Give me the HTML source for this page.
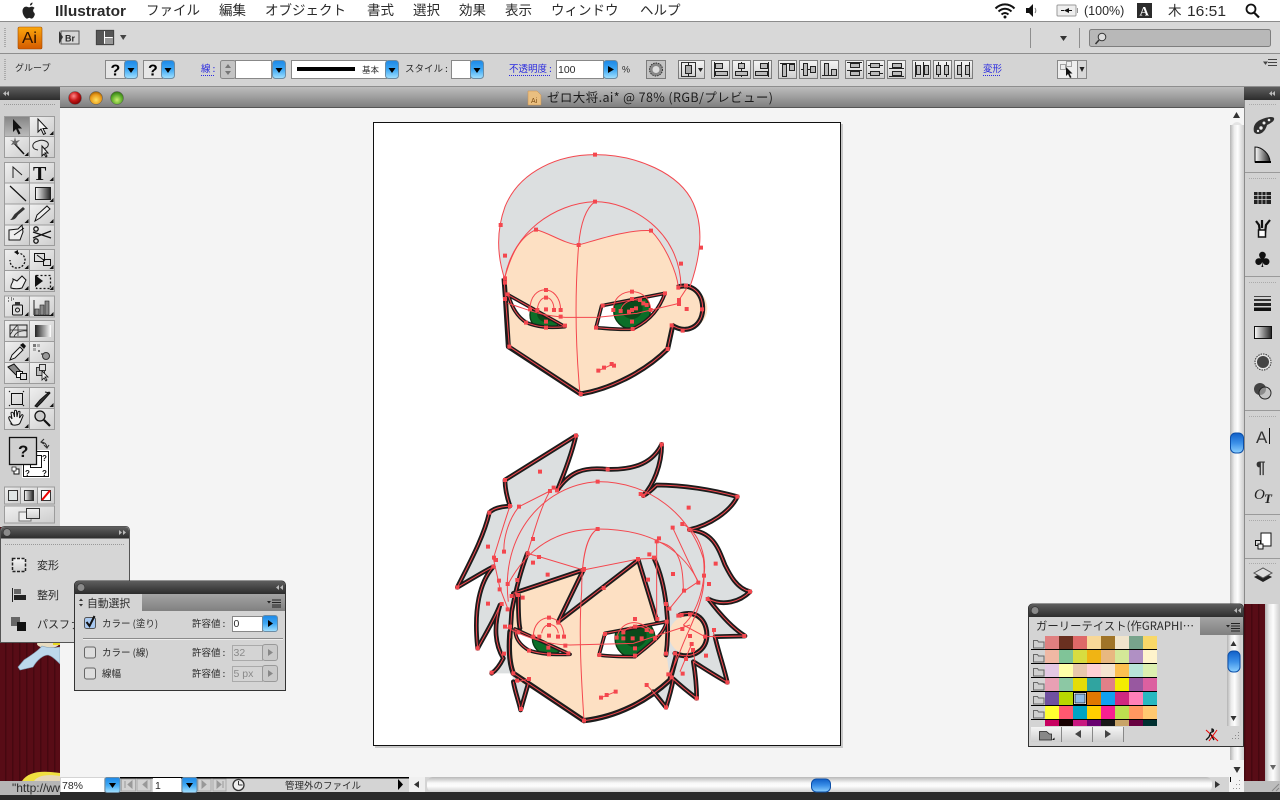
<!DOCTYPE html>
<html lang="ja"><head><meta charset="utf-8"><title>Illustrator</title>
<style>
html,body{margin:0;padding:0;background:#222;width:1280px;height:800px;overflow:hidden}
svg{display:block}
text{font-family:"Liberation Sans","Noto Sans CJK JP",sans-serif;fill:#2a2a2a}
.j{font-family:"Noto Sans CJK JP","Liberation Sans",sans-serif}
.lnk{fill:#2a2ae0}
.dis{fill:#8a8a8a}
.ic{fill:none;stroke:#222;stroke-width:1}
</style></head><body>
<svg width="1280" height="800" viewBox="0 0 1280 800" xmlns="http://www.w3.org/2000/svg">
<defs>
<linearGradient id="hd" x1="0" y1="0" x2="0" y2="1"><stop offset="0" stop-color="#5e5e5e"/><stop offset="1" stop-color="#2c2c2c"/></linearGradient>
<linearGradient id="title" x1="0" y1="0" x2="0" y2="1"><stop offset="0" stop-color="#bdbdbd"/><stop offset="1" stop-color="#7c7c7c"/></linearGradient>
<linearGradient id="blue" x1="0" y1="0" x2="0" y2="1"><stop offset="0" stop-color="#1c88e6"/><stop offset=".5" stop-color="#3ea8f4"/><stop offset="1" stop-color="#a4e2ff"/></linearGradient>
<linearGradient id="btn" x1="0" y1="0" x2="0" y2="1"><stop offset="0" stop-color="#f4f4f4"/><stop offset="1" stop-color="#cfcfcf"/></linearGradient>
<linearGradient id="cell" x1="0" y1="0" x2="1" y2="1"><stop offset="0" stop-color="#f0f0f0"/><stop offset="1" stop-color="#cdcdcd"/></linearGradient>
<linearGradient id="sel" x1="0" y1="0" x2="0" y2="1"><stop offset="0" stop-color="#848484"/><stop offset="1" stop-color="#bcbcbc"/></linearGradient>
<linearGradient id="gk" x1="0" y1="0" x2="1" y2="0"><stop offset="0" stop-color="#fff"/><stop offset="1" stop-color="#222"/></linearGradient>
<linearGradient id="vs" x1="0" y1="0" x2="1" y2="0"><stop offset="0" stop-color="#b4b4b4"/><stop offset=".3" stop-color="#ececec"/><stop offset=".55" stop-color="#fdfdfd"/><stop offset="1" stop-color="#cccccc"/></linearGradient>
<linearGradient id="hs" x1="0" y1="0" x2="0" y2="1"><stop offset="0" stop-color="#b8b8b8"/><stop offset=".4" stop-color="#f8f8f8"/><stop offset=".6" stop-color="#fdfdfd"/><stop offset="1" stop-color="#d0d0d0"/></linearGradient>
<linearGradient id="thumb" x1="0" y1="0" x2="0" y2="1"><stop offset="0" stop-color="#0f5fc8"/><stop offset=".5" stop-color="#3b8fe8"/><stop offset="1" stop-color="#8cd0ff"/></linearGradient>
<linearGradient id="tab2" x1="0" y1="0" x2="0" y2="1"><stop offset="0" stop-color="#a4a4a4"/><stop offset="1" stop-color="#808080"/></linearGradient>
<linearGradient id="ai" x1="0" y1="0" x2="0" y2="1"><stop offset="0" stop-color="#fba70c"/><stop offset="1" stop-color="#d45a00"/></linearGradient>
<pattern id="st" width="7" height="7" patternUnits="userSpaceOnUse"><rect width="7" height="7" fill="#580c16"/><rect x="5" width="1.500" height="7" fill="#460810"/></pattern>
<radialGradient id="r1" cx=".4" cy=".35" r=".7"><stop offset="0" stop-color="#ff8a8a"/><stop offset=".5" stop-color="#c81818"/><stop offset="1" stop-color="#700"/></radialGradient>
<radialGradient id="r2" cx=".5" cy=".65" r=".7"><stop offset="0" stop-color="#ffe060"/><stop offset=".6" stop-color="#e89818"/><stop offset="1" stop-color="#8a5000"/></radialGradient>
<radialGradient id="r3" cx=".5" cy=".65" r=".7"><stop offset="0" stop-color="#c8f070"/><stop offset=".6" stop-color="#58a828"/><stop offset="1" stop-color="#2a6010"/></radialGradient>
<g id="bd"><rect x=".5" y=".5" width="13" height="18" rx="3" fill="url(#blue)" stroke="#6c8ca4"/><path d="M3.5 8h7l-3.5 5z" fill="#000"/></g>
<g id="br"><rect x=".5" y=".5" width="14" height="18" rx="3" fill="url(#blue)" stroke="#6c8ca4"/><path d="M5 6l6 3.5-6 3.5z" fill="#000"/></g>
<g id="ab"><rect x=".5" y=".5" width="18" height="18" fill="url(#btn)" stroke="#7c7c7c"/></g>
<g id="tri"><path d="M0 0h-4l4-4z" fill="#111"/></g>
<clipPath id="ce1"><path d="M85,465L255,560C200,565 170,560 140,548C110,530 95,500 85,465Z"/></clipPath>
<clipPath id="ce2"><path d="M365,497L555,460C540,500 515,540 458,567C420,570 380,565 348,563Z"/></clipPath>
<clipPath id="ce3"><path d="M195,612L360,688C300,690 260,685 235,675C210,660 195,640 195,612Z"/></clipPath>
<clipPath id="ce4"><path d="M465,625L650,590C640,630 610,650 555,695C520,695 480,695 447,690Z"/></clipPath>
</defs>

<!-- desktop -->
<rect width="1280" height="800" fill="url(#st)"/>
<rect y="792" width="1280" height="8" fill="#2a2a2a"/>

<!-- desktop character scraps -->
<ellipse cx="48" cy="644" rx="11" ry="4" fill="#e8dcc0"/><rect x="53" y="642" width="7" height="3" fill="#e8d820"/>
<path d="M42,646C38,651 30,656 24,660L18,667L20,670L33,667C37,660 43,655 48,655C52,656 56,660 60,664V647C54,648 48,648 42,646Z" fill="#bcd8ec" stroke="#7c9cb4" stroke-width=".6"/>
<path d="M22,781C28,772 40,770 60,773V781Z" fill="#f0e040"/><path d="M34,781C38,775 48,774 60,776V781Z" fill="#e6d8b8"/>
<rect x="0" y="781" width="60" height="14" fill="#b6b6b6"/>
<text x="12" y="792" font-size="12">"http://ww</text>

<!-- menu bar -->
<rect width="1280" height="21" fill="#fff"/><rect y="21" width="1280" height="1" fill="#8c8c8c"/>
<path d="M32.5 2.5c-1.5.2-2.6 1.400-2.500 3 1.500 0 2.700-1.500 2.500-3zM34.500 13c-.7-.4-1.300-1.300-1.300-2.500 0-1.200.7-2 1.400-2.500-.8-1-1.900-1.400-2.800-1.400-1.200 0-1.700.7-2.700.7-1 0-1.700-.7-2.800-.7-2 0-3.800 1.700-3.800 4.500 0 3.300 2.700 7.500 4.500 7.500 1 0 1.300-.7 2.300-.7 1 0 1.300.7 2.300.7 1.400 0 2.600-2.100 3.200-4z" fill="#222"/>
<text x="55" y="16" font-size="15" font-weight="bold" textLength="71" lengthAdjust="spacingAndGlyphs">Illustrator</text>
<g class="j" font-size="13.500">
<text class="j" x="146" y="15">ファイル</text><text class="j" x="219" y="15">編集</text><text class="j" x="265" y="15">オブジェクト</text><text class="j" x="367" y="15">書式</text><text class="j" x="413" y="15">選択</text><text class="j" x="459" y="15">効果</text><text class="j" x="505" y="15">表示</text><text class="j" x="551" y="15">ウィンドウ</text><text class="j" x="640" y="15">ヘルプ</text>
</g>
<!-- status icons -->
<g fill="none" stroke="#111" stroke-width="2"><path d="M995.500 8.500c5.500-5.500 13.500-5.500 19 0"/><path d="M998.500 11.500c4-3.700 9-3.700 13 0"/><path d="M1001.500 14.500c2.300-2 4.700-2 7 0"/></g><circle cx="1005" cy="17" r="1.500" fill="#111"/>
<path d="M1026 8h3l4-4v13l-4-4h-3z" fill="#111"/><path d="M1035 8c1 1.500 1 3.500 0 5" fill="none" stroke="#777"/>
<rect x="1057" y="5" width="19" height="11" rx="1" fill="#eee" stroke="#999"/><rect x="1077" y="8" width="1" height="5" fill="#999"/><path d="M1069 8v5l-5-2.500zM1064 10h-3v1h3zM1069 10h3v1h-3z" fill="#111"/>
<text x="1084" y="15" font-size="12.500" fill="#333">(100%)</text>
<rect x="1137" y="3" width="15" height="15" fill="#2b2b2b"/><text x="1139.500" y="15.500" font-size="13" font-weight="bold" style="fill:#fff;font-family:'Liberation Serif',serif">A</text>
<text class="j" x="1168" y="15.500" font-size="13.500">木</text><text x="1187" y="16" font-size="14.500" textLength="39" lengthAdjust="spacingAndGlyphs">16:51</text>
<circle cx="1251" cy="9" r="4.500" fill="none" stroke="#111" stroke-width="1.800"/><path d="M1254 12.500l5 5" stroke="#111" stroke-width="2.200"/>

<!-- app bar -->
<rect y="22" width="1280" height="31" fill="#d8d8d8"/><rect y="53" width="1280" height="1" fill="#8e8e8e"/>
<path d="M5 28v20" stroke="#aaa" stroke-dasharray="1 1" stroke-width="2"/>
<rect x="18" y="27" width="24" height="22" rx="1.500" fill="url(#ai)" stroke="#a04a00" stroke-width=".6"/>
<text x="22" y="43" font-size="16" textLength="15" lengthAdjust="spacingAndGlyphs" style="fill:#2a1000">Ai</text>
<rect x="61" y="31" width="18" height="13" fill="#d6d6d6" stroke="#555"/><path d="M59 31l4 6-4 7z" fill="#333"/><text x="65" y="41.500" font-size="9" font-weight="bold" fill="#333">Br</text>
<rect x="96.500" y="30.500" width="17" height="14" fill="#fff" stroke="#444" stroke-width="1.300"/><path d="M97 31h7v13h-7zM105 31h8v6h-8z" fill="#555"/><path d="M105 38h8v6h-8z" fill="#999"/>
<path d="M120 35h6.500l-3.300 5z" fill="#444"/>
<path d="M1030.500 28v20M1079.500 28v20" stroke="#8e8e8e"/><path d="M1060 36h7l-3.500 5z" fill="#333"/>
<rect x="1089.500" y="29.500" width="181" height="17" rx="2" fill="#b8b8b8" stroke="#7e7e7e"/>
<circle cx="1102" cy="37" r="3.800" fill="#ddd" stroke="#333"/><path d="M1099 40l-3.500 4" stroke="#333" stroke-width="1.500"/>

<!-- control bar -->
<rect y="54" width="1280" height="32" fill="#d4d4d4"/><rect y="86" width="1280" height="1" fill="#8e8e8e"/>
<path d="M5 59v22" stroke="#aaa" stroke-dasharray="1 1" stroke-width="2"/>
<text class="j" x="15" y="71" font-size="9">グループ</text>
<rect x="105.500" y="60.500" width="20" height="18" fill="#e6e6e6" stroke="#888"/><text x="110.500" y="75.500" font-size="16" font-weight="bold" style="fill:#000">?</text><use href="#bd" x="124" y="60"/>
<rect x="143.500" y="60.500" width="19" height="18" fill="#e6e6e6" stroke="#888"/><text x="148" y="75.500" font-size="16" font-weight="bold" style="fill:#000">?</text><use href="#bd" x="161" y="60"/>
<text class="j lnk" x="201" y="72" font-size="9.500">線 :</text><path d="M201 75.500h13" stroke="#2a2ae0" stroke-dasharray="1 1"/>
<rect x="220.500" y="60.500" width="15" height="18" fill="#c4c4c4" stroke="#888" rx="2"/><path d="M225 68h6l-3-4zM225 71h6l-3 4z" fill="#777"/>
<rect x="235.500" y="60.500" width="36" height="18" fill="#fff" stroke="#888"/><use href="#bd" x="272" y="60"/>
<rect x="291.500" y="60.500" width="95" height="18" fill="#fff" stroke="#888"/><rect x="297" y="67" width="58" height="4" fill="#000"/><text class="j" x="362" y="73" font-size="8.500">基本</text><use href="#bd" x="385" y="60"/>
<text class="j" x="405" y="72" font-size="9.500">スタイル :</text>
<rect x="451.500" y="60.500" width="19" height="18" fill="#fff" stroke="#888"/><use href="#bd" x="470" y="60"/>
<text class="j lnk" x="509" y="72" font-size="9.500">不透明度 :</text><path d="M509 75.500h42" stroke="#2a2ae0" stroke-dasharray="1 1"/>
<rect x="556.500" y="60.500" width="47" height="18" fill="#fff" stroke="#888"/><text x="558" y="73" font-size="10.500">100</text><use href="#br" x="603" y="60"/>
<text x="622" y="72.500" font-size="9">%</text>
<!-- globe/recolor -->
<rect x="646.500" y="60.500" width="19" height="18" fill="#c4c4c4" stroke="#7c7c7c"/><circle cx="656" cy="69.500" r="6.500" fill="#888" stroke="#333" stroke-dasharray="1.500 1"/><circle cx="656" cy="69.500" r="3.500" fill="#ddd"/>
<!-- align btns -->
<rect x="678.500" y="60.500" width="26" height="18" fill="url(#btn)" stroke="#7c7c7c"/><rect x="681.500" y="62.500" width="14" height="14" fill="none" stroke="#333"/><path d="M688.500 62v15" stroke="#222"/><rect x="685.500" y="65.500" width="6" height="8" fill="#aaa" stroke="#222"/><path d="M698 68h5l-2.500 4z" fill="#222"/>
<g fill="#bbb" stroke="#222">
<use href="#ab" x="711" y="60"/><path d="M714.500 62v15" /><rect x="715.500" y="63.500" width="7" height="5"/><rect x="715.500" y="71.500" width="12" height="4"/>
<use href="#ab" x="732" y="60"/><path d="M741.500 62v15"/><rect x="738.500" y="63.500" width="6" height="5"/><rect x="735.500" y="71.500" width="12" height="4"/>
<use href="#ab" x="753" y="60"/><path d="M768.500 62v15"/><rect x="760.500" y="63.500" width="7" height="5"/><rect x="755.500" y="71.500" width="12" height="4"/>
<use href="#ab" x="778" y="60"/><path d="M780 63.500h15"/><rect x="782.500" y="64.500" width="4" height="12"/><rect x="789.500" y="64.500" width="5" height="6"/>
<use href="#ab" x="799" y="60"/><path d="M801 69.500h15"/><rect x="803.500" y="63.500" width="4" height="12"/><rect x="810.500" y="66.500" width="5" height="6"/>
<use href="#ab" x="820" y="60"/><path d="M822 75.500h15"/><rect x="824.500" y="63.500" width="4" height="12"/><rect x="831.500" y="69.500" width="5" height="6"/>
<use href="#ab" x="845" y="60"/><path d="M847 62.500h15M847 70.500h15"/><rect x="850.500" y="63.500" width="9" height="4"/><rect x="850.500" y="71.500" width="9" height="4"/>
<use href="#ab" x="866" y="60"/><path d="M868 65.500h15M868 73.500h15"/><rect x="870.500" y="63.500" width="9" height="4"/><rect x="870.500" y="71.500" width="9" height="4"/>
<use href="#ab" x="887" y="60"/><path d="M889 68.500h15M889 76.500h15"/><rect x="892.500" y="63.500" width="9" height="4"/><rect x="892.500" y="71.500" width="9" height="4"/>
<use href="#ab" x="912" y="60"/><path d="M915.500 62v15M923.500 62v15"/><rect x="916.500" y="65.500" width="4" height="9"/><rect x="924.500" y="65.500" width="4" height="9"/>
<use href="#ab" x="933" y="60"/><path d="M938.500 62v15M946.500 62v15"/><rect x="936.500" y="65.500" width="4" height="9"/><rect x="944.500" y="65.500" width="4" height="9"/>
<use href="#ab" x="954" y="60"/><path d="M961.500 62v15M969.500 62v15"/><rect x="957.500" y="65.500" width="4" height="9"/><rect x="965.500" y="65.500" width="4" height="9"/>
</g>
<text class="j lnk" x="983" y="72" font-size="9.500">変形</text><path d="M983 75.500h18" stroke="#2a2ae0" stroke-dasharray="1 1"/>
<rect x="1057.500" y="60.500" width="20" height="18" fill="#eee" stroke="#888"/><rect x="1077.500" y="60.500" width="9" height="18" fill="#d8d8d8" stroke="#888"/><path d="M1079.500 67h5l-2.500 5z" fill="#222"/>
<rect x="1060.500" y="64.500" width="5" height="5" fill="none" stroke="#555" stroke-dasharray="1 1"/><rect x="1066.500" y="61.500" width="5" height="5" fill="none" stroke="#555" stroke-dasharray="1 1"/>
<path d="M1066 67l0 9 2-2 2 4 1.500-.8-2-3.700h3z" fill="#111"/>
<path d="M1264 62h3l-1.500 2zM1268 59.500h9M1268 62.500h9M1268 65.500h9" stroke="#444" fill="#444"/>

<!-- left toolbar -->
<rect y="87" width="60" height="440" fill="#d0d0d0"/>
<rect y="87" width="60" height="13" fill="url(#hd)"/><path d="M9 91l-3 2.500 3 2.500zM6 91l-3 2.500 3 2.500z" fill="#bbb"/>
<path d="M4 104.500h51" stroke="#999" stroke-dasharray="1 1"/>
<g fill="url(#cell)" stroke="#9c9c9c">
<rect x="4.500" y="116.500" width="25" height="20" fill="url(#sel)"/><rect x="29.500" y="116.500" width="25" height="20"/><rect x="4.500" y="136.500" width="25" height="21"/><rect x="29.500" y="136.500" width="25" height="21"/>
<rect x="4.500" y="162.500" width="25" height="20.500"/><rect x="29.500" y="162.500" width="25" height="20.500"/><rect x="4.500" y="183" width="25" height="21"/><rect x="29.500" y="183" width="25" height="21"/><rect x="4.500" y="204" width="25" height="21"/><rect x="29.500" y="204" width="25" height="21"/><rect x="4.500" y="225" width="25" height="20.500"/><rect x="29.500" y="225" width="25" height="20.500"/>
<rect x="4.500" y="249.500" width="25" height="21"/><rect x="29.500" y="249.500" width="25" height="21"/><rect x="4.500" y="270.500" width="25" height="21"/><rect x="29.500" y="270.500" width="25" height="21"/>
<rect x="4.500" y="296" width="25" height="21"/><rect x="29.500" y="296" width="25" height="21"/>
<rect x="4.500" y="320.500" width="25" height="21"/><rect x="29.500" y="320.500" width="25" height="21"/><rect x="4.500" y="341.500" width="25" height="21"/><rect x="29.500" y="341.500" width="25" height="21"/><rect x="4.500" y="362.500" width="25" height="21"/><rect x="29.500" y="362.500" width="25" height="21"/>
<rect x="4.500" y="387.500" width="25" height="21"/><rect x="29.500" y="387.500" width="25" height="21"/><rect x="4.500" y="408.500" width="25" height="21"/><rect x="29.500" y="408.500" width="25" height="21"/>
<rect x="4.500" y="487" width="16" height="17"/><rect x="20.500" y="487" width="17" height="17"/><rect x="37.500" y="487" width="17" height="17"/><rect x="4.500" y="506" width="50" height="17"/>
</g>
<!-- tool icons -->
<path d="M13 119v13l3-3 2.500 5.500 2-1-2.500-5h4z" fill="#111"/>
<path d="M38 119v13l3-3 2.500 5.500 2-1-2.500-5h4z" fill="#f4f4f4" stroke="#111"/>
<path d="M14 143l10 11" stroke="#111" stroke-width="1.500"/><path d="M10 140l4 1 1-4 1 4 4-1-3 3 1 4-3-3-4 1 2-3z" fill="#666"/>
<path d="M38 150c-7-1-7-7 0-9 6-2 12 1 10 5-1 2-4 3-6 3" class="ic"/><path d="M42 146v10l2-2 2 3 1-1-2-3h3z" fill="#eee" stroke="#111"/>
<path d="M13 178v-11l9 8" class="ic" stroke-width="1.300"/>
<text x="33" y="180" font-size="20" style="font-family:'Liberation Serif',serif;font-weight:bold;fill:#111">T</text>
<path d="M10 186l16 15" stroke="#111" stroke-width="1.200"/>
<rect x="35.500" y="187.500" width="15" height="12" fill="url(#gk)" stroke="#222"/>
<path d="M10 220c5 0 6-2 8-5l7-6-2-2-7 6c-3 2-3 5-6 7z" fill="#333"/>
<path d="M35 221l2-6 10-9 3 3-10 9z" fill="#eee" stroke="#111"/>
<path d="M9 230l9-1 4-4 1 7-3 8H9zM14 235l10-7" fill="#eee" stroke="#111"/>
<path d="M33 232l18 6M33 238l18-7" stroke="#111" stroke-width="1.300"/><circle cx="36" cy="229" r="2.200" fill="none" stroke="#111" stroke-width="1.300"/><circle cx="36" cy="241" r="2.200" fill="none" stroke="#111" stroke-width="1.300"/>
<path d="M17 253c5 0 8 3 8 7s-3 8-8 8-7-4-7-8" fill="none" stroke="#111" stroke-width="1.300" stroke-dasharray="2 1.500"/><path d="M14 252l4-2v5z" fill="#111"/>
<rect x="34.500" y="253.500" width="10" height="8" fill="#ddd" stroke="#111"/><rect x="43.500" y="259.500" width="7" height="6" fill="#ddd" stroke="#111"/><path d="M37 255l8 6" stroke="#111"/>
<path d="M11 288c-1-4 3-6 2-9l4 2 5-5 4 4-4 8c-3 1-8 1-11 0z" fill="#eee" stroke="#111"/>
<rect x="36.500" y="275.500" width="14" height="13" fill="none" stroke="#111" stroke-dasharray="2 2" stroke-width="1.300"/><path d="M35 275v12l8-6z" fill="#111"/>
<rect x="12.500" y="305" width="10" height="10" rx="1" fill="#ddd" stroke="#111"/><rect x="15" y="302" width="5" height="3" fill="#333"/><circle cx="17.500" cy="310" r="2" fill="none" stroke="#111"/><path d="M8 298h1M11 298h1M8 301h1M11 300h1M13 299h1" stroke="#111"/>
<path d="M34 315v-15" stroke="#222"/><rect x="35" y="309" width="4" height="6" fill="#888" stroke="#222" stroke-width=".6"/><rect x="40" y="305" width="4" height="10" fill="#888" stroke="#222" stroke-width=".6"/><rect x="45" y="301" width="4" height="14" fill="#888" stroke="#222" stroke-width=".6"/><path d="M34 315.500h17" stroke="#222"/>
<rect x="10" y="325" width="17" height="12" fill="#ddd" stroke="#222"/><path d="M10 335c3-5 6-9 8-10M14 337c1-4 6-7 13-6M18 326v10M10 330h17" fill="none" stroke="#222" stroke-width=".7"/>
<rect x="35" y="325" width="16" height="12" fill="url(#gk)" transform="rotate(180 43 331)"/>
<path d="M10 360l2-5 8-8 3 3-8 8z" fill="#eee" stroke="#111"/><path d="M20 345l3-2 3 3-2 3z" fill="#111"/>
<g fill="#777"><rect x="33" y="344" width="3" height="3"/><rect x="37" y="344" width="3" height="3" fill="#aaa"/><rect x="33" y="348" width="3" height="3" fill="#aaa"/><rect x="38" y="350" width="2" height="2"/><rect x="41" y="353" width="2" height="2"/></g><circle cx="46" cy="356" r="3.500" fill="#999" stroke="#333"/>
<path d="M8 367l6-3 8 9-5 3z" fill="#888" stroke="#111"/><rect x="16.500" y="371.500" width="6" height="6" fill="#fff" stroke="#111"/><rect x="20.500" y="373.500" width="6" height="6" fill="#ddd" stroke="#111"/>
<rect x="36.500" y="367.500" width="8" height="8" fill="#bbb" stroke="#333"/><rect x="39.500" y="364.500" width="6" height="6" fill="#ddd" stroke="#333"/><path d="M42 371v9l2-2 2 3 1-1-2-3h3z" fill="#eee" stroke="#111" stroke-width=".8"/>
<rect x="11.500" y="393.500" width="11" height="11" fill="none" stroke="#111"/><path d="M9 391l1 1M9 406l1-1M24 391l-1 1M24 406l-1-1" stroke="#111"/>
<path d="M35 406l5-6 9-8 1 1-8 9-5 5zM45 392l5 1" fill="#333" stroke="#111"/>
<path d="M12 424c-2-3-4-6-3-7 1-1 2 0 3 2l-1-6c0-1 2-1 2.500 0l1 4v-6c0-1 2-1 2 0l.5 6 1-5c.3-1 2-1 2 0l-.5 6 2-3c.6-1 2 0 1.500 1l-3 7c-1 2-7 3-9 1z" fill="#eee" stroke="#111"/>
<circle cx="40" cy="416" r="5" fill="#ccc" stroke="#111" stroke-width="1.300"/><path d="M44 420l6 6" stroke="#111" stroke-width="2.200"/>
<g>
<use href="#tri" x="28.500" y="156"/><use href="#tri" x="53.500" y="135"/><use href="#tri" x="28.500" y="181"/><use href="#tri" x="53.500" y="181"/><use href="#tri" x="53.500" y="202"/><use href="#tri" x="28.500" y="223"/><use href="#tri" x="53.500" y="223"/><use href="#tri" x="53.500" y="290"/><use href="#tri" x="28.500" y="269"/><use href="#tri" x="53.500" y="269"/><use href="#tri" x="28.500" y="290"/><use href="#tri" x="28.500" y="316"/><use href="#tri" x="53.500" y="316"/><use href="#tri" x="28.500" y="361"/><use href="#tri" x="53.500" y="407"/><use href="#tri" x="28.500" y="428"/>
</g>
<!-- fill & stroke -->
<rect x="22" y="450" width="28" height="28" fill="#fff"/><rect x="23.500" y="451.500" width="25" height="25" fill="none" stroke="#111"/><rect x="30.500" y="455.500" width="11" height="12" fill="none" stroke="#111"/>
<text x="42" y="461" font-size="8" font-weight="bold" style="fill:#111">?</text><text x="42" y="476" font-size="8" font-weight="bold" style="fill:#111">?</text><text x="25" y="476" font-size="8" font-weight="bold" style="fill:#111">?</text>
<rect x="9.500" y="437.500" width="27" height="27" fill="#d0d0d0" stroke="#111" stroke-width="1.300"/><text x="18" y="457" font-size="17" font-weight="bold" style="fill:#111">?</text>
<rect x="14" y="469" width="5" height="5" fill="#fff" stroke="#111"/><rect x="12" y="467" width="4" height="4" fill="#fff" stroke="#111" stroke-width=".7"/>
<path d="M41 442c3 0 5 1 6 5M44 439l-3 3 3 2M44 445l3 3 2-3" fill="none" stroke="#333" stroke-width="1.100"/>
<rect x="8.500" y="490.500" width="9" height="10" fill="#dfe5e5" stroke="#333"/><rect x="24.500" y="490.500" width="9" height="10" fill="url(#gk)" stroke="#333"/><rect x="41.500" y="490.500" width="9" height="10" fill="#fff" stroke="#333"/><path d="M42 500l8-9.500" stroke="#e00" stroke-width="2"/>
<rect x="19" y="512" width="12" height="9" fill="#eee" stroke="#777"/><rect x="26.500" y="508.500" width="13" height="10" fill="url(#btn)" stroke="#333"/>

<!-- right dock -->
<rect x="1244" y="87" width="36" height="517" fill="#d2d2d2"/>
<rect x="1244" y="87" width="36" height="13" fill="url(#hd)"/><rect x="1244" y="100" width="1" height="504" fill="#8a8a8a"/><path d="M1272 91l-3 2.500 3 2.500zM1275 91l-3 2.500 3 2.500z" fill="#bbb"/>
<g stroke="#9a9a9a"><path d="M1245 172.500h35M1245 276.500h35M1245 410.500h35M1245 514.500h35M1245 558.500h35"/></g>
<g stroke="#aaa" stroke-dasharray="1 1"><path d="M1249 104.500h27M1249 178.500h27M1249 282.500h27M1249 416.500h27M1249 520.500h27M1249 563.500h27"/></g>
<path d="M1254 132c-1-4 0-9 6-12 6-3 13-4 14-2 1 3-3 5-7 7-1 4-4 9-9 9-2 0-3-1-4-2z" fill="#2f2f2f"/><circle cx="1261" cy="128" r="1.700" fill="#eee"/><circle cx="1258" cy="131" r="1.200" fill="#eee"/><circle cx="1264" cy="123" r="1.500" fill="#eee"/><circle cx="1269" cy="120" r="1.300" fill="#eee"/>
<path d="M1255 147c7 0 15 7 15 15h-15z" fill="url(#gk)" stroke="#111"/><path d="M1255 162h16" stroke="#000" stroke-width="2"/>
<rect x="1254" y="192" width="17" height="12" fill="#222"/><path d="M1254 195.500h17M1254 199.500h17M1258 192v12M1262 192v12M1266 192v12" stroke="#ddd" stroke-width=".8"/>
<path d="M1256 221l3 4 1 8h5l1-8 4-5M1262 220v8" stroke="#111" stroke-width="2.200" fill="none"/><rect x="1258.500" y="230" width="7" height="7" fill="#fff" stroke="#111" stroke-width="1.500"/>
<text x="1253" y="267" font-size="21" style="fill:#111;font-family:'DejaVu Sans',sans-serif">♣</text>
<rect x="1254" y="296" width="17" height="1" fill="#444"/><rect x="1254" y="299" width="17" height="2" fill="#333"/><rect x="1254" y="303" width="17" height="3" fill="#222"/><rect x="1254" y="307.500" width="17" height="3.500" fill="#111"/>
<rect x="1254.500" y="326.500" width="17" height="12" fill="url(#gk)" stroke="#111"/>
<circle cx="1263" cy="362" r="8" fill="#e6e6e6" stroke="#333" stroke-dasharray="1.500 1"/><circle cx="1263" cy="362" r="6" fill="#444"/>
<circle cx="1260" cy="389" r="6" fill="#444"/><circle cx="1265" cy="393" r="6" fill="#bbb" fill-opacity=".6" stroke="#222"/>
<text x="1256" y="443" font-size="17" style="fill:#333">A</text><path d="M1269.500 428v16" stroke="#111"/>
<text x="1256" y="473" font-size="17" font-weight="bold" style="fill:#333">¶</text>
<text x="1254" y="499" font-size="15" font-style="italic" style="font-family:'Liberation Serif',serif;fill:#222">O</text><text x="1264" y="503" font-size="13" font-style="italic" font-weight="bold" style="font-family:'Liberation Serif',serif;fill:#222">T</text>
<rect x="1261" y="533" width="10" height="13" fill="#fff" stroke="#111"/><rect x="1255.500" y="540.500" width="5" height="5" fill="#ddd" stroke="#111"/><rect x="1258" y="544" width="5" height="5" fill="#eee" stroke="#111"/>
<path d="M1254 577l9-5 9 5-9 5z" fill="#222"/><path d="M1254 573l9-5 9 5-9 5z" fill="#ddd" stroke="#555"/>
<!-- right behind -->
<rect x="1265" y="604" width="15" height="177" fill="url(#vs)"/><path d="M1273 770l-3-5h6z" fill="#666"/>
<rect x="1244" y="781" width="36" height="11" fill="#bdbdbd"/><path d="M1272 791l7-7M1276 791l3-3" stroke="#888"/>

<!-- doc window -->
<rect x="60" y="87" width="1184" height="21" fill="url(#title)"/><rect x="60" y="107" width="1184" height="1" fill="#555"/>
<circle cx="75" cy="98" r="6.500" fill="url(#r1)" stroke="#555" stroke-width=".5"/><circle cx="96" cy="98" r="6.500" fill="url(#r2)" stroke="#555" stroke-width=".5"/><circle cx="117" cy="98" r="6.500" fill="url(#r3)" stroke="#555" stroke-width=".5"/>
<path d="M528 91h9l4 4v10h-13z" fill="#eabf80" stroke="#c89050" stroke-width=".5"/><text x="531" y="103" font-size="7" style="fill:#7a4a10">Ai</text>
<text class="j" x="547" y="102" font-size="12.500" textLength="226" style="fill:#1c1c1c">ゼロ大将.ai* @ 78% (RGB/プレビュー)</text>
<rect x="60" y="108" width="1170" height="669" fill="#f4f4f4"/>
<!-- artboard -->
<rect x="375" y="124" width="468" height="624" fill="#c8c8c8"/>
<rect x="373.500" y="122.500" width="467" height="623" fill="#fff" stroke="#111"/>

<!-- Head 1 -->
<g transform="translate(480 140) scale(.33333)">
<path d="M75,420C90,340 120,290 168,269C210,280 250,310 296,315C350,300 440,268 513,272C550,300 590,400 595,440L585,555L563,627C500,690 400,745 302,762L88,620L75,470Z" fill="#fde0c3"/>
<circle cx="620" cy="505" r="62" fill="#fde0c3"/>
<path d="M75,420C45,330 55,255 75,200C120,90 240,44 345,44C470,44 600,100 640,190C670,260 665,340 630,440L595,440C590,400 550,300 513,272C440,268 350,300 296,315C250,310 210,280 168,269C120,290 90,340 75,420Z" fill="#dcdfe0"/>
<g fill="none" stroke="#1c1c1c" stroke-width="15" stroke-linejoin="round">
<path d="M72,415L76,470L85,620L302,762C400,745 500,690 563,627L578,558"/>
<path d="M592,442C625,428 670,450 668,510C665,560 620,585 575,555"/>
</g>
<path d="M85,465L255,560C200,565 170,560 140,548C110,530 95,500 85,465Z" fill="#fff"/>
<path d="M365,497L555,460C540,500 515,540 458,567C420,570 380,565 348,563Z" fill="#fff"/>
<g clip-path="url(#ce1)"><circle cx="197" cy="525" r="47" fill="#0b6e28" stroke="#0a3a14" stroke-width="4"/><circle cx="197" cy="520" r="26" fill="#0a4a1a"/></g>
<g clip-path="url(#ce2)"><circle cx="456" cy="512" r="55" fill="#0b6e28" stroke="#0a3a14" stroke-width="4"/><circle cx="456" cy="505" r="32" fill="#0a4a1a"/></g>
<g fill="none" stroke="#1c1c1c" stroke-width="11" stroke-linejoin="round">
<path d="M85,465L255,560C200,565 170,560 140,548C110,530 95,500 85,465Z"/>
<path d="M365,497L555,460C540,500 515,540 458,567C420,570 380,565 348,563Z"/>
</g>
<g fill="none" stroke="#f4474e" stroke-width="3">
<path d="M75,420C45,330 55,255 75,200C120,90 240,44 345,44C470,44 600,100 640,190C670,260 665,340 630,440"/>
<path d="M75,410C100,280 220,190 345,185C450,185 600,270 603,440"/>
<path d="M345,185C310,210 300,270 296,315C285,450 285,600 300,762"/>
<path d="M75,410C95,340 120,290 168,269C210,280 250,310 296,315C350,300 440,268 513,272C560,320 590,400 595,440"/>
<path d="M72,415L76,470L88,620L302,762C400,745 500,690 563,627L578,558"/>
<path d="M592,442C625,428 670,450 668,510C665,560 620,585 575,555"/>
<path d="M85,465L255,560C200,565 170,560 140,548C110,530 95,500 85,465Z"/>
<path d="M365,497L555,460C540,500 515,540 458,567C420,570 380,565 348,563Z"/>
<path d="M83,490C150,510 170,525 255,532L350,532L470,520L597,490"/>
<path d="M150,508C150,430 240,430 242,510M172,510C175,460 222,460 222,510"/>
<path d="M400,510C400,470 430,455 456,455C490,455 512,480 512,510M422,513C425,480 480,470 490,490"/>
<path d="M355,692L400,672"/><path d="M597,480L620,445"/>
</g>
<path d="M345 44h.01M62 255h.01M663 323h.01M345 185h.01M75 347h.01M168 269h.01M296 315h.01M513 272h.01M603 371h.01M75 415h.01M75 428h.01M83 463h.01M75 477h.01M88 620h.01M302 762h.01M563 627h.01M575 556h.01M608 572h.01M666 508h.01M620 507h.01M618 437h.01M595 443h.01M597 480h.01M597 492h.01M198 450h.01M198 473h.01M150 508h.01M172 510h.01M198 508h.01M222 510h.01M242 510h.01M242 530h.01M198 545h.01M198 563h.01M138 548h.01M255 557h.01M368 497h.01M348 563h.01M400 510h.01M422 513h.01M447 515h.01M456 510h.01M468 505h.01M456 455h.01M456 477h.01M480 480h.01M490 490h.01M500 495h.01M512 510h.01M456 545h.01M458 567h.01M555 460h.01M355 692h.01M372 683h.01M395 672h.01M402 677h.01" stroke="#f4474e" stroke-width="12" stroke-linecap="square"/>
</g>

<!-- Head 2 -->
<g transform="translate(450 425) scale(.33333)">
<path id="h2" d="M378,32L165,165C165,190 172,220 180,243C150,245 130,250 118,263C100,340 55,420 22,487C60,465 100,440 130,425C90,470 70,550 83,670C110,620 135,580 150,540C135,590 130,650 160,700C150,720 140,735 125,745L185,745C195,790 205,820 212,855L235,775L402,887C500,875 580,830 610,800L648,847C655,825 665,790 670,762C695,785 720,805 740,820C740,780 735,740 730,710C770,735 800,755 832,772C820,720 805,680 795,635L885,633C850,610 820,580 775,522C820,545 870,530 900,500C860,490 840,450 825,420C805,370 790,320 718,314C780,300 840,260 862,215C790,195 700,180 620,180C610,190 595,205 580,212C610,180 635,120 635,58C610,110 560,135 473,133C400,125 360,140 322,195C345,140 365,85 378,32Z" fill="#dcdfe0"/>
<path d="M190,505L400,435L325,590L565,405L620,585L650,590L650,690L660,765C590,830 500,875 402,887L200,765L185,745L170,640Z" fill="#fde0c3"/>
<circle cx="715" cy="630" r="58" fill="#fde0c3"/>
<g fill="none" stroke="#1c1c1c" stroke-width="14" stroke-linejoin="round" stroke-linecap="round">
<path d="M378,32L165,165C165,190 172,220 180,243C150,245 130,250 118,263C100,340 55,420 22,487C60,465 100,440 130,425C90,470 70,550 83,670C110,620 135,580 150,540C135,590 130,650 160,700C150,720 140,735 125,745"/>
<path d="M190,770C195,800 205,825 212,855L235,775"/>
<path d="M378,32C365,85 345,140 322,195C360,140 400,125 473,133C560,135 610,110 635,58C635,120 610,180 580,212C595,205 610,190 620,180C700,180 790,195 862,215C840,260 780,300 718,314C790,320 805,370 825,420C840,450 860,490 900,500C870,530 820,545 775,522C820,580 850,610 885,633L795,635C805,680 820,720 832,772C800,755 770,735 730,710C735,740 740,780 740,820C720,805 695,785 670,762C665,790 655,825 648,847C630,825 620,810 610,800"/>
<path d="M190,505L400,435L325,590L565,405L620,585"/>
<path d="M612,400C650,480 660,600 648,690"/>
<path d="M232,385C215,430 200,480 185,560L180,640"/>
<path d="M205,510C205,550 205,590 210,610"/>
<path d="M180,620C175,680 180,720 190,745L402,887C500,875 590,830 660,765L680,690" stroke-width="16"/>
<path d="M690,570C750,550 775,600 770,640C765,680 720,705 675,685" stroke-width="15"/>
</g>
<path d="M195,612L360,688C300,690 260,685 235,675C210,660 195,640 195,612Z" fill="#fff"/>
<path d="M465,625L650,590C640,630 610,650 555,695C520,695 480,695 447,690Z" fill="#fff"/>
<g clip-path="url(#ce3)"><circle cx="297" cy="640" r="50" fill="#0b6e28" stroke="#0a3a14" stroke-width="4"/><circle cx="297" cy="635" r="27" fill="#0a4a1a"/></g>
<g clip-path="url(#ce4)"><circle cx="555" cy="640" r="60" fill="#0b6e28" stroke="#0a3a14" stroke-width="4"/><circle cx="555" cy="632" r="35" fill="#0a4a1a"/></g>
<g fill="none" stroke="#1c1c1c" stroke-width="11" stroke-linejoin="round">
<path d="M195,612L360,688C300,690 260,685 235,675C210,660 195,640 195,612Z"/>
<path d="M465,625L650,590C640,630 610,650 555,695C520,695 480,695 447,690Z"/>
</g>
<g fill="none" stroke="#f4474e" stroke-width="3">
<path d="M378,32L165,165C165,190 172,220 180,243C150,245 130,250 118,263C100,340 55,420 22,487C60,465 100,440 130,425C90,470 70,550 83,670C110,620 135,580 150,540C135,590 130,650 160,700C150,720 140,735 125,745"/>
<path d="M190,770C195,800 205,825 212,855L235,775"/>
<path d="M378,32C365,85 345,140 322,195C360,140 400,125 473,133C560,135 610,110 635,58C635,120 610,180 580,212C595,205 610,190 620,180C700,180 790,195 862,215C840,260 780,300 718,314C790,320 805,370 825,420C840,450 860,490 900,500C870,530 820,545 775,522C820,580 850,610 885,633L795,635C805,680 820,720 832,772C800,755 770,735 730,710C735,740 740,780 740,820C720,805 695,785 670,762C665,790 655,825 648,847C630,825 610,800 590,780"/>
<path d="M190,505L400,435L325,590L565,405L620,585"/>
<path d="M612,400C650,480 660,600 648,690"/>
<path d="M232,385C215,430 200,480 185,560L180,640"/>
<path d="M205,510C205,550 205,590 210,610"/>
<path d="M180,620C175,680 180,720 190,745L402,887C500,875 590,830 660,765L680,690"/>
<path d="M690,570C750,550 775,600 770,640C765,680 720,705 675,685"/>
<path d="M195,612L360,688C300,690 260,685 235,675C210,660 195,640 195,612Z"/>
<path d="M465,625L650,590C640,630 610,650 555,695C520,695 480,695 447,690Z"/>
<path d="M175,530C150,330 280,180 443,170C600,170 720,270 760,400C770,470 745,560 700,600"/>
<path d="M173,480C230,370 320,312 443,312C550,312 680,340 745,470L700,500L658,552"/>
<path d="M443,312C410,330 395,400 395,500C385,620 395,780 402,887"/>
<path d="M232,385L267,395L400,435L565,402L612,400"/>
<path d="M300,198C270,250 250,330 232,385"/>
<path d="M180,243C160,300 140,370 130,400L150,490L175,555"/>
<path d="M207,245C170,290 160,350 162,380M300,198L207,245"/>
<path d="M620,350L620,585M620,350C680,360 700,400 700,500"/>
<path d="M697,297C750,320 770,400 762,450C765,530 720,600 690,680L660,750"/>
<path d="M668,308L745,473"/>
<path d="M165,605C230,640 300,660 360,660L550,655L720,600"/>
<path d="M700,600L765,635L885,633M790,615L793,640"/>
<path d="M725,657L690,740M729,675L735,710"/>
<path d="M237,762L205,770"/>
<path d="M250,635C250,560 342,560 342,635M275,625C280,590 320,590 325,625"/>
<path d="M500,640C510,590 560,575 610,620M520,622C540,595 590,600 600,625"/>
<path d="M453,818L497,800"/>
</g>
<path d="M378 32h.01M165 165h.01M180 243h.01M207 245h.01M118 263h.01M300 198h.01M311 188h.01M321 196h.01M270 140h.01M473 133h.01M443 170h.01M635 58h.01M572 207h.01M580 212h.01M716 248h.01M862 215h.01M697 297h.01M668 308h.01M718 314h.01M443 312h.01M249 342h.01M162 380h.01M114 365h.01M233 385h.01M267 396h.01M249 413h.01M132 398h.01M138 405h.01M130 425h.01M293 449h.01M147 467h.01M173 477h.01M149 493h.01M202 465h.01M22 487h.01M185 513h.01M204 510h.01M218 518h.01M400 435h.01M402 432h.01M461 489h.01M564 402h.01M598 388h.01M612 398h.01M620 349h.01M627 340h.01M669 447h.01M594 464h.01M702 497h.01M745 473h.01M762 452h.01M777 477h.01M797 416h.01M900 500h.01M773 522h.01M648 537h.01M658 551h.01M114 536h.01M155 537h.01M173 553h.01M83 670h.01M125 743h.01M162 686h.01M190 745h.01M201 767h.01M237 762h.01M213 852h.01M165 605h.01M180 605h.01M297 578h.01M297 600h.01M325 593h.01M250 635h.01M268 635h.01M297 632h.01M324 635h.01M342 635h.01M205 622h.01M237 677h.01M297 688h.01M295 668h.01M346 662h.01M355 685h.01M465 627h.01M448 690h.01M555 582h.01M555 605h.01M520 622h.01M500 638h.01M520 640h.01M548 640h.01M575 640h.01M590 615h.01M605 620h.01M615 640h.01M650 590h.01M622 582h.01M555 692h.01M555 670h.01M648 686h.01M685 572h.01M695 570h.01M720 568h.01M697 612h.01M720 633h.01M792 615h.01M765 635h.01M883 633h.01M725 657h.01M729 675h.01M768 692h.01M675 685h.01M708 702h.01M698 746h.01M655 748h.01M665 757h.01M590 780h.01M648 847h.01M740 820h.01M832 772h.01M402 887h.01M453 818h.01M470 810h.01M497 800h.01" stroke="#f4474e" stroke-width="12" stroke-linecap="square"/>
</g>

<!-- vertical scrollbar -->
<rect x="1230" y="108" width="14" height="669" fill="url(#vs)"/>
<rect x="1230" y="108" width="14" height="17" fill="#f6f6f6"/><path d="M1232 125c3-4 7-4 10 0" fill="#e4e4e4"/>
<path d="M1236.500 112l3.500 6h-7z" fill="#333"/>
<rect x="1230" y="760" width="14" height="17" fill="#f2f2f2"/><path d="M1233.500 767h7l-3.500 6z" fill="#333"/>
<rect x="1230.500" y="433" width="13" height="20" rx="5" fill="url(#thumb)" stroke="#0c4fa8"/>

<!-- status bar -->
<rect x="60" y="777" width="1184" height="15" fill="#d4d4d4"/>
<rect x="120" y="777" width="289" height="1.500" fill="#000"/>
<rect x="61" y="778" width="43" height="14" fill="#fff"/><text x="62" y="789" font-size="10.500">78%</text>
<rect x="105" y="777.500" width="15" height="15" rx="2" fill="url(#blue)" stroke="#6c8ca4"/><path d="M109 783h7l-3.500 5z" fill="#000"/>
<g fill="#d2d2d2" stroke="#aaa"><rect x="121.500" y="779" width="14" height="12"/><rect x="137" y="779" width="14" height="12"/><rect x="198" y="779" width="13" height="12"/><rect x="213" y="779" width="13" height="12"/></g>
<path d="M125 781v7M132 781l-4 3.500 4 3.500zM147 781l-4 3.500 4 3.500zM202 781l4 3.500-4 3.500zM217 781l4 3.500-4 3.500zM223 781v7" fill="#999" stroke="#999"/>
<rect x="153" y="778" width="28" height="14" fill="#fff"/><text x="155" y="789" font-size="10.500">1</text>
<rect x="182" y="777.500" width="15" height="15" rx="2" fill="url(#blue)" stroke="#6c8ca4"/><path d="M186 783h7l-3.500 5z" fill="#000"/>
<circle cx="238.500" cy="785" r="5.500" fill="#eee" stroke="#333" stroke-width="1.300"/><path d="M238.500 785v-4M238.500 785h4" stroke="#333"/>
<text class="j" x="285" y="789" font-size="9.500">管理外のファイル</text>
<path d="M398 779l5 5.500-5 5.500z" fill="#000"/>
<rect x="409" y="777" width="16" height="15" fill="#f0f0f0"/><path d="M419 781v7l-5-3.500z" fill="#333"/>
<rect x="427" y="777" width="785" height="15" rx="6" fill="url(#hs)"/>
<rect x="811.500" y="779" width="19" height="13" rx="5" fill="url(#thumb)" stroke="#0c4fa8"/>
<path d="M1215 781v7l5-3.500z" fill="#333"/>
<rect x="1229" y="777" width="15" height="15" fill="#f4f4f4"/><g fill="#999"><rect x="1239" y="780" width="1" height="1"/><rect x="1236" y="784" width="1" height="1"/><rect x="1239" y="784" width="1" height="1"/><rect x="1233" y="788" width="1" height="1"/><rect x="1236" y="788" width="1" height="1"/><rect x="1239" y="788" width="1" height="1"/></g>
<rect x="1230" y="777" width="1" height="5" fill="#000"/>

<!-- collapsed panel -->
<path d="M.5 531a4 4 0 0 1 4-4.500H125a4 4 0 0 1 4.500 4.500V642.500H.5z" fill="#d6d6d6" stroke="#555"/>
<path d="M1 531a4 4 0 0 1 4-4h120a4 4 0 0 1 4 4v7.500H1z" fill="url(#hd)"/>
<circle cx="7" cy="532.500" r="3.800" fill="#8a8a8a" stroke="#333" stroke-width=".6"/>
<path d="M119 530l3 2.500-3 2.500zM123 530l3 2.500-3 2.500z" fill="#bbb"/>
<path d="M5 544.500h119" stroke="#999" stroke-dasharray="1 1"/>
<rect x="12.500" y="558.500" width="13" height="13" fill="url(#btn)" stroke="#222" stroke-dasharray="3 1.500" stroke-width="1.500"/>
<rect x="12" y="588" width="1" height="14" fill="#222"/><rect x="14" y="589" width="7" height="5" fill="#666"/><rect x="14" y="595" width="12" height="5" fill="#222"/>
<rect x="11" y="617" width="9" height="9" fill="#666"/><rect x="17" y="622" width="9" height="9" fill="#111"/>
<text class="j" x="37" y="569" font-size="11">変形</text><text class="j" x="37" y="599" font-size="11">整列</text><text class="j" x="37" y="628" font-size="11">パスファ</text>

<!-- auto select panel -->
<path d="M74.500 585a4 4 0 0 1 4-4H281a4 4 0 0 1 4.500 4V690.500H74.500z" fill="#d4d4d4" stroke="#333"/>
<path d="M75 585a4 4 0 0 1 4-4h202a4 4 0 0 1 4 4v9H75z" fill="url(#hd)"/>
<circle cx="81" cy="587.500" r="3.800" fill="#8a8a8a" stroke="#333" stroke-width=".6"/>
<path d="M279 585l-3 2.500 3 2.500zM283 585l-3 2.500 3 2.500z" fill="#bbb"/>
<rect x="75" y="594" width="210" height="17" fill="url(#tab2)"/><rect x="75" y="594" width="67" height="17" fill="#d4d4d4"/>
<path d="M79 601l2-2.500 2 2.500zM79 604l2 2.500 2-2.500z" fill="#333"/>
<text class="j" x="87" y="607" font-size="10.800">自動選択</text>
<path d="M267 601h4l-2 2.500z" fill="#222"/><path d="M272 600h9M272 602.500h9M272 605h9M272 607h9" stroke="#222"/>
<rect x="84.500" y="617.500" width="11" height="11" rx="2" fill="#a8c8f0" stroke="#555"/><path d="M86.500 622l3 4 5-10" fill="none" stroke="#111" stroke-width="2"/>
<text class="j" x="102" y="627" font-size="9.500">カラー (塗り)</text>
<text class="j" x="192" y="627" font-size="9.500">許容値 :</text>
<rect x="232.500" y="616.500" width="30" height="15" fill="#fff" stroke="#888"/><text x="233.500" y="627" font-size="10.500">0</text>
<rect x="262.500" y="615.500" width="15" height="16" rx="2.500" fill="url(#blue)" stroke="#6c8ca4"/><path d="M268 620l5 3.500-5 3.500z" fill="#000"/>
<path d="M83 638.500h200" stroke="#8a8a8a"/><path d="M83 639.500h200" stroke="#eee"/>
<rect x="84.500" y="647" width="11" height="11" rx="2" fill="#ddd" stroke="#666"/><text class="j" x="102" y="656" font-size="9.500">カラー (線)</text><text class="j" x="192" y="656" font-size="9.500">許容値 :</text>
<rect x="232.500" y="645.500" width="30" height="15" fill="#d4d4d4" stroke="#aaa"/><text class="dis" x="233.500" y="656" font-size="10.500">32</text>
<rect x="262.500" y="644.500" width="15" height="16" rx="2.500" fill="#cacaca" stroke="#999"/><path d="M268 649l5 3.500-5 3.500z" fill="#888"/>
<rect x="84.500" y="668" width="11" height="11" rx="2" fill="#ddd" stroke="#666"/><text class="j" x="102" y="677" font-size="9.500">線幅</text><text class="j" x="192" y="677" font-size="9.500">許容値 :</text>
<rect x="232.500" y="666.500" width="30" height="15" fill="#d4d4d4" stroke="#aaa"/><text class="dis" x="233.500" y="677" font-size="10.500">5 px</text>
<rect x="262.500" y="665.500" width="15" height="16" rx="2.500" fill="#cacaca" stroke="#999"/><path d="M268 670l5 3.500-5 3.500z" fill="#888"/>

<!-- swatches panel -->
<path d="M1028.500 608a4 4 0 0 1 4-4H1239a4 4 0 0 1 4.500 4V746.500H1028.500z" fill="#d4d4d4" stroke="#333"/>
<path d="M1029 608a4 4 0 0 1 4-4h206a4 4 0 0 1 4 4v9H1029z" fill="url(#hd)"/>
<circle cx="1035" cy="610.500" r="3.800" fill="#8a8a8a" stroke="#333" stroke-width=".6"/>
<path d="M1237 608l-3 2.500 3 2.500zM1241 608l-3 2.500 3 2.500z" fill="#bbb"/>
<rect x="1029" y="617" width="171" height="18" fill="#d4d4d4"/><rect x="1200" y="617" width="43" height="18" fill="url(#tab2)"/>
<text class="j" x="1036" y="630" font-size="11.300" textLength="158">ガーリーテイスト(作GRAPHI…</text>
<path d="M1226 625h4l-2 2.500z" fill="#222"/><path d="M1231 623.500h9M1231 626h9M1231 628.500h9M1231 631h9" stroke="#222"/>
<rect x="1031" y="635" width="196" height="91" fill="#d4d4d4"/>
<g>
<g fill="#e08080"><rect x="1045" y="636" width="14" height="13"/></g><rect x="1059" y="636" width="14" height="13" fill="#6a3020"/><rect x="1073" y="636" width="14" height="13" fill="#de6868"/><rect x="1087" y="636" width="14" height="13" fill="#f8d898"/><rect x="1101" y="636" width="14" height="13" fill="#a07428"/><rect x="1115" y="636" width="14" height="13" fill="#f0e4cc"/><rect x="1129" y="636" width="14" height="13" fill="#78a48c"/><rect x="1143" y="636" width="14" height="13" fill="#f8d868"/>
<rect x="1045" y="650" width="14" height="13" fill="#f0b8a4"/><rect x="1059" y="650" width="14" height="13" fill="#80c498"/><rect x="1073" y="650" width="14" height="13" fill="#d8dc40"/><rect x="1087" y="650" width="14" height="13" fill="#f0b414"/><rect x="1101" y="650" width="14" height="13" fill="#e8b880"/><rect x="1115" y="650" width="14" height="13" fill="#d4e898"/><rect x="1129" y="650" width="14" height="13" fill="#b090c4"/><rect x="1143" y="650" width="14" height="13" fill="#fff4cc"/>
<rect x="1045" y="664" width="14" height="13" fill="#e4c8e4"/><rect x="1059" y="664" width="14" height="13" fill="#ffffa8"/><rect x="1073" y="664" width="14" height="13" fill="#e8c8ac"/><rect x="1087" y="664" width="14" height="13" fill="#ffd0d4"/><rect x="1101" y="664" width="14" height="13" fill="#f4e4d0"/><rect x="1115" y="664" width="14" height="13" fill="#fcc050"/><rect x="1129" y="664" width="14" height="13" fill="#b8e4d8"/><rect x="1143" y="664" width="14" height="13" fill="#dcf0b0"/>
<rect x="1045" y="678" width="14" height="13" fill="#e8a0b4"/><rect x="1059" y="678" width="14" height="13" fill="#8cc8a4"/><rect x="1073" y="678" width="14" height="13" fill="#e4dc08"/><rect x="1087" y="678" width="14" height="13" fill="#30a4a0"/><rect x="1101" y="678" width="14" height="13" fill="#e08088"/><rect x="1115" y="678" width="14" height="13" fill="#f4ec00"/><rect x="1129" y="678" width="14" height="13" fill="#9858a0"/><rect x="1143" y="678" width="14" height="13" fill="#dc60a0"/>
<rect x="1045" y="692" width="14" height="13" fill="#7050a0"/><rect x="1059" y="692" width="14" height="13" fill="#b8d800"/><rect x="1073" y="692" width="14" height="13" fill="#000"/><rect x="1074" y="693" width="12" height="11" fill="#fff"/><rect x="1075" y="694" width="10" height="9" fill="#90bce8" stroke="#000" stroke-width=".6"/><rect x="1087" y="692" width="14" height="13" fill="#e07800"/><rect x="1101" y="692" width="14" height="13" fill="#10a0f0"/><rect x="1115" y="692" width="14" height="13" fill="#d02880"/><rect x="1129" y="692" width="14" height="13" fill="#ff80b8"/><rect x="1143" y="692" width="14" height="13" fill="#28b8c0"/>
<rect x="1045" y="706" width="14" height="13" fill="#ffff30"/><rect x="1059" y="706" width="14" height="13" fill="#ff5870"/><rect x="1073" y="706" width="14" height="13" fill="#00a4c4"/><rect x="1087" y="706" width="14" height="13" fill="#ffd000"/><rect x="1101" y="706" width="14" height="13" fill="#f82090"/><rect x="1115" y="706" width="14" height="13" fill="#bce050"/><rect x="1129" y="706" width="14" height="13" fill="#ff9860"/><rect x="1143" y="706" width="14" height="13" fill="#ffc870"/>
<rect x="1045" y="720" width="14" height="6" fill="#c80060"/><rect x="1059" y="720" width="14" height="6" fill="#180000"/><rect x="1073" y="720" width="14" height="6" fill="#c81880"/><rect x="1087" y="720" width="14" height="6" fill="#680070"/><rect x="1101" y="720" width="14" height="6" fill="#181818"/><rect x="1115" y="720" width="14" height="6" fill="#c8a468"/><rect x="1129" y="720" width="14" height="6" fill="#680040"/><rect x="1143" y="720" width="14" height="6" fill="#003030"/>
</g>
<g stroke="#000"><path d="M1031 649.500h126M1031 663.500h126M1031 677.500h126M1031 691.500h126M1031 705.500h126M1031 719.500h126"/></g>
<g fill="#cfcfcf" stroke="#666"><path d="M1033.500 640.500h4l1 1.500h5.500v6h-10.500zM1033.500 654.500h4l1 1.500h5.500v6h-10.500zM1033.500 668.500h4l1 1.500h5.500v6h-10.500zM1033.500 682.500h4l1 1.500h5.500v6h-10.500zM1033.500 696.500h4l1 1.500h5.500v6h-10.500zM1033.500 710.500h4l1 1.500h5.500v6h-10.500z"/></g>
<rect x="1227" y="635" width="14" height="91" fill="url(#vs)"/><path d="M1233.500 641l3 5h-6zM1230.500 716h6l-3 5z" fill="#333"/>
<rect x="1228" y="651" width="12" height="21" rx="5" fill="url(#thumb)" stroke="#0c4fa8"/>
<rect x="1031" y="727" width="31" height="15" fill="url(#btn)"/><rect x="1062" y="727" width="31" height="15" fill="url(#btn)"/><rect x="1093" y="727" width="31" height="15" fill="url(#btn)"/><path d="M1061.500 727v15M1092.500 727v15M1123.500 727v15" stroke="#888"/>
<path d="M1039.500 731.500h7l3 2.500h2v6h-12z" fill="#888" stroke="#222" stroke-width=".8"/><path d="M1052 740h2.500v-2.500z" fill="#111"/>
<path d="M1081 730v8l-6-4zM1105 730v8l6-4z" fill="#444"/>
<path d="M1206 730l12 11" stroke="#e00"/><path d="M1212 729a1.500 1.500 0 1 1 0 3zM1211 732l-2 5-3 3M1211 735l3 5" stroke="#111" fill="none" stroke-width="1.300"/><path d="M1217 730l-8 11" stroke="#e00"/>
<g fill="#888"><rect x="1238" y="732" width="1" height="1"/><rect x="1235" y="735" width="1" height="1"/><rect x="1238" y="735" width="1" height="1"/><rect x="1232" y="738" width="1" height="1"/><rect x="1235" y="738" width="1" height="1"/><rect x="1238" y="738" width="1" height="1"/></g>
</svg>
</body></html>
